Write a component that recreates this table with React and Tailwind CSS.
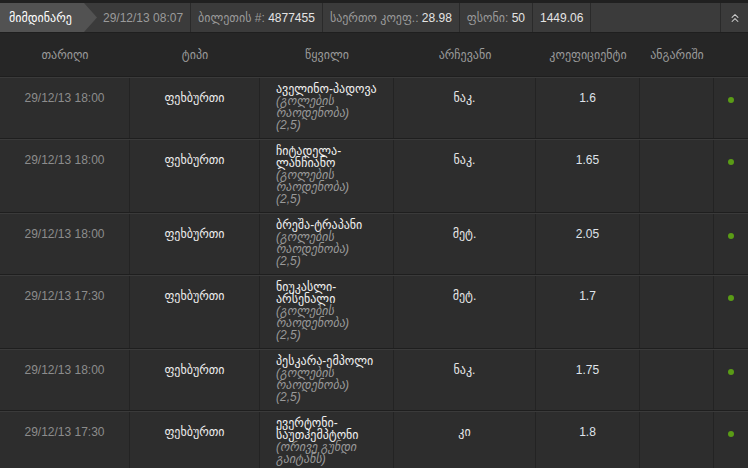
import { ChevronsUp } from 'lucide-react'

const rows = [
  { date: '29/12/13 18:00', match: ['აველინო-პადოვა'], note: ['(გოლების', 'რაოდენობა)', '(2,5)'], pick: 'ნაკ.', coef: '1.6' },
  { date: '29/12/13 18:00', match: ['ჩიტადელა-', 'ლანჩიანო'], note: ['(გოლების', 'რაოდენობა)', '(2,5)'], pick: 'ნაკ.', coef: '1.65' },
  { date: '29/12/13 18:00', match: ['ბრეშა-ტრაპანი'], note: ['(გოლების', 'რაოდენობა)', '(2,5)'], pick: 'მეტ.', coef: '2.05' },
  { date: '29/12/13 17:30', match: ['ნიუკასლი-', 'არსენალი'], note: ['(გოლების', 'რაოდენობა)', '(2,5)'], pick: 'მეტ.', coef: '1.7' },
  { date: '29/12/13 18:00', match: ['პესკარა-ემპოლი'], note: ['(გოლების', 'რაოდენობა)', '(2,5)'], pick: 'ნაკ.', coef: '1.75' },
  { date: '29/12/13 17:30', match: ['ევერტონი-', 'საუთჰემპტონი'], note: ['(ორივე გუნდი', 'გაიტანს)'], pick: 'კი', coef: '1.8' },
]

const cols = 'grid grid-cols-[130px_130px_134px_142px_104px_74px_34px]'

function Stat({ label, value }) {
  return (
    <div className="flex items-center px-[7px] h-full border-r border-[#2a2a2a]">
      {label && <span className="text-[#9a9a9a]">{label}&nbsp;</span>}
      <span className="text-[#e4e4e4]">{value}</span>
    </div>
  )
}

export default function App() {
  return (
    <div className="w-[748px] h-[468px] bg-[#262626] overflow-hidden text-[12px] font-['Liberation_Sans','DejaVu_Sans',sans-serif]">
      <div className="h-[3px] bg-[#202020]" />
      <div className="flex h-[30px] bg-[#3b3b3b] border-b border-[#1f1f1f]">
        <div className="w-[97px] h-full bg-[#525252] text-white flex items-center pl-[9px] [clip-path:polygon(0_0,84px_0,97px_50%,84px_100%,0_100%)]">
          მიმდინარე
        </div>
        <div className="flex items-center pl-[6px] pr-[7px] h-full border-r border-[#2a2a2a] text-[#9a9a9a]">29/12/13 08:07</div>
        <Stat label="ბილეთის #:" value="4877455" />
        <Stat label="საერთო კოეფ.:" value="28.98" />
        <Stat label="ფსონი:" value="50" />
        <Stat value="1449.06" />
        <div className="flex-1" />
        <div className="w-[28px] h-full border-l border-[#2a2a2a] flex items-center justify-center text-[#cfcfcf]">
          <ChevronsUp size={14} strokeWidth={1.8} />
        </div>
      </div>

      <div className={`${cols} h-[43px] items-center text-[#9a9a9a] text-center`}>
        <div>თარიღი</div>
        <div>ტიპი</div>
        <div>წყვილი</div>
        <div>არჩევანი</div>
        <div>კოეფიციენტი</div>
        <div>ანგარიში</div>
        <div />
      </div>

      {rows.map((r, i) => (
        <div key={i} className={`${cols} bg-[#2d2d2d] border-t border-[#3a3a3a] shadow-[0_-1px_0_#1e1e1e] mt-px`}>
          <div className="border-r border-[#232323] text-center text-[#8c8c8c] pt-[14px] leading-[12px]">{r.date}</div>
          <div className="border-r border-[#232323] text-center text-[#ececec] pt-[14px] leading-[12px]">ფეხბურთი</div>
          <div className="border-r border-[#232323] pl-[16px] pt-[5px] pb-[7px] leading-[12px]">
            {r.match.map((m, j) => (
              <div key={j} className="text-[#f0f0f0]">{m}</div>
            ))}
            {r.note.map((n, j) => (
              <div key={j} className="italic text-[#999]">{n}</div>
            ))}
          </div>
          <div className="border-r border-[#232323] text-center text-[#e8e8e8] pt-[14px] leading-[12px]">{r.pick}</div>
          <div className="border-r border-[#232323] text-center text-[#dfe3ea] pt-[14px] leading-[12px]">{r.coef}</div>
          <div className="border-r border-[#232323]" />
          <div className="flex justify-center pt-[19px]">
            <div className="w-[6px] h-[6px] rounded-full bg-[#5a9c16]" />
          </div>
        </div>
      ))}
    </div>
  )
}
